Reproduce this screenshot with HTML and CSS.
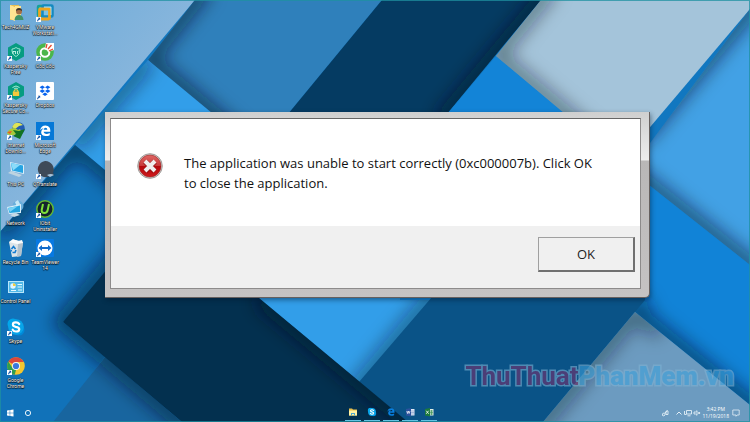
FILE: index.html
```html
<!DOCTYPE html>
<html lang="en">
<head>
<meta charset="utf-8">
<meta name="viewport" content="width=device-width, initial-scale=1">
<title>Desktop</title>
<link rel="stylesheet" href="styles.css">
</head>
<body>
<svg class="wallpaper" viewBox="0 0 750 422" preserveAspectRatio="none" aria-hidden="true">
  <defs>
    <filter id="soft" filterUnits="userSpaceOnUse" x="-60" y="-60" width="870" height="542"><feGaussianBlur stdDeviation="9"/></filter>
    <linearGradient id="sky" x1="0" y1="0" x2="1" y2="1"><stop offset="0" stop-color="#68a9d8"/><stop offset=".5" stop-color="#86b5dc"/><stop offset="1" stop-color="#86b5dc"/></linearGradient>
    <clipPath id="c1"><path d="M195 0H382L250 160 148 60Z"/></clipPath>
    <clipPath id="c2"><path d="M148 60 450 310 359 382 75 145Z"/></clipPath>
    <clipPath id="c3"><path d="M0 232 75 145 180 233 63 322 105 357 53 422H0Z"/></clipPath>
    <clipPath id="c4"><path d="M382 0H541L380 195 250 160Z"/></clipPath>
    <clipPath id="c5"><path d="M541 0H750V9L640 139 620 160 496 56Z"/></clipPath>
    <clipPath id="c6"><path d="M750 9V265L630 170Z"/></clipPath>
    <clipPath id="c7"><path d="M630 170 750 265V405L635 312 600 280Z"/></clipPath>
    <clipPath id="c8"><path d="M438 290H645V300L635 312 543 422H408L359 382Z"/></clipPath>
    <clipPath id="c9"><path d="M635 312 750 405V422H543Z"/></clipPath>
    <clipPath id="c10"><path d="M105 357 182 422H53Z"/></clipPath>
    <clipPath id="c11"><path d="M148 220 63 322 182 422H408L259 298 200 250Z"/></clipPath>
  </defs>
  <path fill="#1177c0" d="M0 0H750V422H0Z"/>
  <path fill="url(#sky)" d="M0 0H195L0 232Z"/>
  <g clip-path="url(#c1)"><path fill="#2f80bb" d="M0 0H750V422H0Z"/><path class="shade" d="M205-12 148 60 270 162"/></g>
  <g clip-path="url(#c2)"><path fill="#329ee9" d="M0 0H750V422H0Z"/><path class="shade light" d="M148 60 75 145M438 290 352 394"/></g>
  <g clip-path="url(#c3)"><path fill="#1172b9" d="M0 0H750V422H0Z"/><path class="shade" d="M0 232 75 145 180 233M150 215 63 322 115 366"/></g>
  <g clip-path="url(#c4)"><path fill="#053b62" d="M0 0H750V422H0Z"/><path class="shade" d="M551-12 440 122"/></g>
  <path fill="#1384d7" d="M496 56 620 160 600 300H400V170Z"/>
  <g clip-path="url(#c5)"><path fill="#a4c4da" d="M0 0H750V422H0Z"/><path class="shade light" d="M551-12 496 56 610 151"/></g>
  <g clip-path="url(#c6)"><path fill="#42a1e5" d="M0 0H750V422H0Z"/><path class="shade" d="M760-3 640 139M630 170 760 273"/></g>
  <g clip-path="url(#c7)"><path fill="#1183d7" d="M0 0H750V422H0Z"/><path class="shade" d="M645 300 635 312 770 421"/></g>
  <g clip-path="url(#c8)"><path fill="#0a5387" d="M0 0H750V422H0Z"/></g>
  <g clip-path="url(#c9)"><path fill="#6c9bc0" d="M0 0H750V422H0Z"/><path class="shade light" d="M635 312 535 432M635 312 660 332"/></g>
  <g clip-path="url(#c10)"><path fill="#18659f" d="M0 0H750V422H0Z"/><path class="shade" d="M95 349 190 429"/></g>
  <g clip-path="url(#c11)"><path fill="#03304f" d="M0 0H750V422H0Z"/><path class="shade" d="M259 298 420 432"/></g>
</svg>

<svg class="defs" aria-hidden="true">
  <symbol id="arrow" viewBox="0 0 6 6"><path fill="#fff" d="M0 0H6V6H0Z"/><path fill="#1553a5" d="M2.300 1H5V3.700L4.100 2.900Q2.600 3.600 2.500 5.200H1.300Q1.200 3 3.200 2Z"/></symbol>
  <symbol id="skype" viewBox="0 0 18 18"><circle cx="6" cy="6" r="5.500" fill="#00a9ed"/><circle cx="12" cy="12" r="5.500" fill="#0089d8"/><circle cx="9" cy="9" r="7.800" fill="#08a4e8"/><path fill="none" stroke="#fff" stroke-width="2.200" stroke-linecap="round" d="M12.200 6Q11 4.300 8.700 4.400 5.900 4.500 5.900 6.500 5.900 8.200 8.700 8.800 12.300 9.400 12.200 11.300 12 13.500 9 13.500 6.700 13.500 5.700 11.700"/></symbol>
  <symbol id="edge" viewBox="0 0 12 12"><path d="M.7 5.500Q1.500 .5 6.300 .5 11.300 .8 11.300 5.700V7H4.200Q4.500 9.200 7 9.300 9 9.300 10.700 8.300V10.700Q9 11.600 6.500 11.600 1.800 11.300 1.700 7.500 1.800 5 4.300 3.500 2.300 3.600 .7 5.500ZM4.300 5H8.200Q8.100 2.900 6.400 2.900 4.700 3.100 4.300 5Z"/></symbol>
</svg>

<div class="screen">
<main class="desktop">
  <ul class="icons">
    <li><a class="icon" href="#"><svg viewBox="0 0 18 18"><path fill="#e6bd50" d="M3 1H12V16H3Z"/><path fill="#ffe592" d="M3 1 8 3V17L3 15ZM8 2H14V14H8Z"/><circle cx="12" cy="7.500" r="3" fill="#a66f45"/><path fill="#3e3429" d="M9 7Q9 4 12 4 15 4 15 7Q12 5 9 7Z"/><path fill="#40936a" d="M7.500 16Q8 11 12 11 16 11 16.500 16Z"/></svg><span>Tech4GMUZ</span></a></li>
    <li><a class="icon" href="#"><svg viewBox="0 0 18 18"><rect x="2" y="2" width="10" height="10" rx="1" fill="none" stroke="#15a19a" stroke-width="2.500"/><rect x="6.500" y="1.500" width="10" height="11" rx="1" fill="#7cc3e4" stroke="#168abf" stroke-width="2.500"/><rect x="3.500" y="5" width="10" height="10" rx="1" fill="none" stroke="#eda51e" stroke-width="2.800"/><path fill="none" stroke="#c5e9f4" stroke-width=".7" d="M8 3H15V11"/><use href="#arrow" y="13" width="5" height="5"/></svg><span>VMware<br>Workstati...</span></a></li>
    <li><a class="icon" href="#"><svg viewBox="0 0 18 18"><path fill="#079c81" d="M9 0 17 4.500V13.500L9 18 1 13.500V4.500Z"/><path fill="none" stroke="#b6f5de" stroke-width=".8" d="M9 4.500Q7 6 5 6 4.500 11 9 13.500 13.500 11 13 6 11 6 9 4.500Z"/><path fill="none" stroke="#e1fff5" stroke-width=".8" d="M6 8V11M6 8.500H8M8.500 8V11M10.500 8V11M11.500 8H13"/><use href="#arrow" y="13" width="5" height="5"/></svg><span>Kaspersky<br>Free</span></a></li>
    <li><a class="icon" href="#"><svg viewBox="0 0 18 18"><circle cx="9" cy="9" r="8.800" fill="#4bb64b"/><path fill="#fff" d="M8.500 7 10 0H18V7L11 9Z"/><circle cx="9" cy="9.500" r="4.300" fill="none" stroke="#fff" stroke-width="2"/><circle cx="9" cy="9.500" r="2.700" fill="#4bb64b"/><path fill="none" stroke="#e6492f" stroke-width="1.300" d="M10 5 11 1M12 6 15.500 2M13 8 17 6"/><use href="#arrow" y="13" width="5" height="5"/></svg><span>Cốc Cốc</span></a></li>
    <li><a class="icon" href="#"><svg viewBox="0 0 18 18"><path fill="#079c81" d="M9 0 17 4.500V13.500L9 18 1 13.500V4.500Z"/><path fill="none" stroke="#b6f5de" stroke-width=".9" d="M5.500 5.500Q9 2.500 12.500 5.500M7 7Q9 5 11 7"/><path fill="none" stroke="#f4cf45" stroke-width="1.200" d="M7 11V9Q9 6.500 11 9V11"/><rect x="5.800" y="9.500" width="6.400" height="4.500" rx=".6" fill="#f5c93c"/><use href="#arrow" y="13" width="5" height="5"/></svg><span>Kaspersky<br>Secure Co...</span></a></li>
    <li><a class="icon" href="#"><svg viewBox="0 0 18 18"><rect width="18" height="18" rx="1" fill="#fff"/><path fill="#0864ee" d="M6.300 3.500 9 5.300 6.300 7.100 3.600 5.300ZM11.700 3.500 14.400 5.300 11.700 7.100 9 5.300ZM6.300 7.300 9 9.100 6.300 10.900 3.600 9.100ZM11.700 7.300 14.400 9.100 11.700 10.900 9 9.100ZM9 10.500 11.700 12.300 9 14.100 6.300 12.300Z"/><use href="#arrow" y="13" width="5" height="5"/></svg><span>Dropbox</span></a></li>
    <li><a class="icon" href="#"><svg viewBox="0 0 18 18"><circle cx="11.500" cy="6.500" r="6.300" fill="#235cb2"/><path fill="#dfe457" d="M7 2Q11-1 16 3L12 4 8 7 5 5Z"/><path fill="#a7ca38" d="M2 8Q7 4 11 8L13 7 14 9 7 13Q1 14 0 11Z"/><path fill="#127323" d="M6 8 12 9 18 7 13 17 6 14 9 12Z"/><path fill="#e95828" d="M0 10 5 9 3 12Z"/><use href="#arrow" y="13" width="5" height="5"/></svg><span>Internet<br>Downlo...</span></a></li>
    <li><a class="icon" href="#"><svg viewBox="0 0 18 18"><rect width="18" height="18" fill="#0678d7"/><use href="#edge" x="3.500" y="3" width="11.500" height="11.500" fill="#fff"/><use href="#arrow" y="13" width="5" height="5"/></svg><span>Microsoft<br>Edge</span></a></li>
    <li><a class="icon" href="#"><svg viewBox="0 0 18 18"><path fill="#d8effa" d="M3 1 17 4V13L4 10Z"/><path fill="#26a4e2" d="M4 2 16 4.500V12L5 9.500Z"/><path fill="#8adcfa" d="M4 2 13 4 6 9.500Z"/><path fill="#bed4e0" d="M1 12 4 10 15 14 12 16Z"/></svg><span>This PC</span></a></li>
    <li><a class="icon" href="#"><svg viewBox="0 0 18 18"><path fill="#3e4a58" d="M9 0A8.500 8.500 0 0 1 17 12L18 14 14 15Q9 18 4 14A8.500 8.500 0 0 1 9 0Z"/><path fill="#a7c3da" d="M11 14Q15 12 18 14L14 16Z"/><use href="#arrow" y="13" width="5" height="5"/></svg><span>QTranslate</span></a></li>
    <li><a class="icon" href="#"><svg viewBox="0 0 18 18"><circle cx="11" cy="6" r="5.500" fill="#69aeda"/><path fill="#c4e7f7" d="M8 2 11 0 13 4 10 7Z"/><path fill="#d8effa" d="M0 7 14 4V13L2 14Z"/><path fill="#24a5df" d="M1 8 13 5.500V12L2.500 13Z"/><path fill="#77d2f5" d="M1 8 11 6 3 12Z"/><path fill="#c8dce6" d="M3 15 9 13 13 15 7 17Z"/></svg><span>Network</span></a></li>
    <li><a class="icon" href="#"><svg viewBox="0 0 18 18"><circle cx="9" cy="9" r="8.200" fill="#14232d" stroke="#64b832" stroke-width="1.500"/><path fill="none" stroke="#7de139" stroke-width="2" d="M7 4 5.700 10Q5.500 13 8.500 13 11 13 11.700 10L13 4"/><use href="#arrow" y="13" width="5" height="5"/></svg><span>IObit<br>Uninstaller</span></a></li>
    <li><a class="icon" href="#"><svg viewBox="0 0 18 18"><path fill="#dce4e8" d="M2 3 9 1 16 3 14 17 5 18Z"/><path fill="#b4c2cc" d="M11 5 16 3 14 17 10 18Z"/><path fill="#f9fbfc" d="M2 3 6 0 11 2 15 1 16 4 10 5Z"/><path fill="none" stroke="#147bd0" stroke-width="1.600" d="M4.500 10 6.500 7.500 8.500 10M9 11 8 13.500H5.500M4.500 12.500 4 11"/></svg><span>Recycle Bin</span></a></li>
    <li><a class="icon" href="#"><svg viewBox="0 0 18 18"><rect width="18" height="18" rx="1" fill="#0879e2"/><circle cx="9" cy="9" r="7.500" fill="#fff"/><path fill="#116bca" d="M2.500 9 6 6V8H12V6L15.500 9 12 12V10H6V12Z"/><use href="#arrow" y="13" width="5" height="5"/></svg><span>TeamViewer<br>14</span></a></li>
    <li><a class="icon" href="#"><svg viewBox="0 0 18 18"><rect x="1" y="3" width="16" height="12" fill="#b8e6fa"/><rect x="2" y="4" width="14" height="10" fill="#51b9e8"/><circle cx="6" cy="8" r="2.700" fill="#e1f6ff"/><path fill="#f4cd3d" d="M6 8V5.300A2.700 2.700 0 0 1 8.700 8Z"/><path stroke="#e2f8ff" d="M10.500 6.500H15M10.500 9H15M4 12.500H9M11 12H15"/></svg><span>Control Panel</span></a></li>
    <li></li>
    <li><a class="icon" href="#"><svg viewBox="0 0 18 18"><use href="#skype" width="18" height="18"/><use href="#arrow" y="13" width="5" height="5"/></svg><span>Skype</span></a></li>
    <li></li>
    <li><a class="icon" href="#"><svg viewBox="0 0 18 18"><circle cx="9" cy="9" r="8.800" fill="#f3c62e"/><path fill="#dc473b" d="M9 9 1.300 4.600A8.800 8.800 0 0 1 16.700 5H9Z"/><path fill="#309e50" d="M1.300 4.600 5.500 11 9 13 7.700 17.700A8.800 8.800 0 0 1 1.300 4.600Z"/><circle cx="9" cy="9" r="4" fill="#f2f5f7"/><circle cx="9" cy="9" r="3.100" fill="#3a78dd"/><use href="#arrow" y="13" width="5" height="5"/></svg><span>Google<br>Chrome</span></a></li>
  </ul>

  <section class="dialog" role="alertdialog" aria-describedby="message">
    <div class="pane">
      <div class="content">
        <svg class="error" viewBox="0 0 26 26" aria-hidden="true"><defs><linearGradient id="red" x1="0" y1="0" x2="0" y2="1"><stop offset="0" stop-color="#df6764"/><stop offset=".48" stop-color="#c93a3b"/><stop offset=".52" stop-color="#b4080d"/><stop offset="1" stop-color="#cf1a1d"/></linearGradient></defs><circle cx="13" cy="13" r="12.300" fill="#d9d5d3" stroke="#8b8583" stroke-width=".8"/><circle cx="13" cy="13" r="11" fill="url(#red)" stroke="#9b2424" stroke-width=".6"/><path stroke="#781012" stroke-opacity=".5" stroke-width="5.500" d="M8 8.500 18 18.500M18 8.500 8 18.500"/><path stroke="#f0eeee" stroke-width="4" d="M8 8 18 18M18 8 8 18"/></svg>
        <p id="message">The application was unable to start correctly (0xc000007b). Click OK to close the application.</p>
      </div>
      <div class="actions"><button type="button">OK</button></div>
    </div>
  </section>
  <p class="watermark"><span>ThuThuat</span><b>PhanMem.vn</b></p>
</main>

<footer class="taskbar">
  <div class="start">
    <button type="button" aria-label="Start"><svg viewBox="0 0 8 8"><path fill="#fff" d="M1 1.500 3.700 1V3.700H1ZM4.200 1 7.500.5V3.700H4.200ZM1 4.200H3.700V7L1 6.500ZM4.200 4.200H7.500V7.500L4.200 7Z"/></svg></button>
    <button type="button" aria-label="Search"><svg viewBox="0 0 8 8"><circle cx="4" cy="4" r="2.600" fill="none" stroke="#e9f4fb"/></svg></button>
  </div>
  <div class="apps">
    <button type="button" aria-label="File Explorer"><svg viewBox="0 0 10 10"><path fill="#eabf4d" d="M1 1.500H4L5 2.500H9V8.500H1Z"/><path fill="#fff2a4" d="M1 3.500H9V8.500H1Z"/><path fill="#4ba7cf" d="M3 6H7V8.500H6V7H4V8.500H3Z"/></svg></button>
    <button type="button" aria-label="Skype"><svg viewBox="0 0 10 10"><use href="#skype" x=".5" y=".5" width="9" height="9"/></svg></button>
    <button type="button" aria-label="Microsoft Edge"><svg viewBox="0 0 10 10"><use href="#edge" x="1" y="1" width="8" height="8" fill="#087fdf"/></svg></button>
    <button type="button" aria-label="Word"><svg viewBox="0 0 10 10"><path fill="#dfe7f5" d="M5 2H9.500V8.500H5Z"/><path fill="#2b529d" d="M1 2 6 1V9.500L1 8.500Z"/><path fill="none" stroke="#fff" stroke-width=".7" d="M1.800 4 2.500 6.500 3.300 4 4.100 6.500 5 4"/><path stroke="#6786bd" stroke-width=".5" d="M6 4H9M6 5.500H9M6 7H9"/></svg></button>
    <button type="button" aria-label="Excel"><svg viewBox="0 0 10 10"><path fill="#e0efe3" d="M5 2H9.500V8.500H5Z"/><path fill="#1c7a3e" d="M1 2 6 1V9.500L1 8.500Z"/><path stroke="#fff" stroke-width=".8" d="M2.200 3.700 4.700 6.800M4.700 3.700 2.200 6.800"/><path stroke="#3c9256" stroke-width=".7" d="M6 4H9M6 5.500H9M6 7H9M7.500 3V8"/></svg></button>
  </div>
  <div class="tray">
    <svg class="pen" viewBox="0 0 8 8"><path fill="none" stroke="#e2eef6" stroke-width=".9" d="M1.500 6.500Q1 4 3 4 5 4 4 6 3 7.500 1.500 6.500ZM4 4 6.500 1.500M5 2V5.500H7V2Z"/></svg>
    <svg viewBox="0 0 8 8"><path fill="none" stroke="#e2eef6" d="M1.500 5.500 4 3 6.500 5.500"/></svg>
    <svg viewBox="0 0 8 8"><path fill="none" stroke="#e2eef6" stroke-width=".9" d="M2.500 1.500H7.500V5H2.500ZM3.500 6.800H6.500M.5 2V5.500H2.500"/></svg>
    <svg viewBox="0 0 8 8"><path fill="none" stroke="#e2eef6" stroke-width=".9" d="M1 3H2.500L4 1.700V6.300L2.500 5H1ZM5.300 3 7 5M7 3 5.300 5"/></svg>
    <time>3:42 PM<br>11/19/2018</time>
    <svg viewBox="0 0 8 8"><path fill="none" stroke="#e2eef6" stroke-width=".8" d="M.8 1H7.200V6H5L4 7.300V6H.8Z"/></svg>
  </div>
</footer>
</div>
</body>
</html>
```

FILE: styles.css
```css
* { box-sizing: border-box; }
body { margin: 0; background: #1177c0; font-family: "Open Sans", "Noto Sans", sans-serif; overflow: hidden; }
button { padding: 0; border: 0; background: none; font: inherit; }
svg { display: block; }
.defs { position: absolute; width: 0; height: 0; }
.wallpaper { position: absolute; inset: 0; width: 100%; height: 100%; }
.shade { fill: none; stroke: #001524; stroke-opacity: .6; stroke-width: 16; filter: url(#soft); }
.shade.light { stroke-opacity: .45; }

.screen { position: relative; min-height: 100vh; display: flex; flex-direction: column; border: 1px solid rgb(31 145 160 / .75); }
.desktop { flex: 1; display: flex; }

.icons { margin: 0; padding: 3px 0 9px; list-style: none; display: grid; grid-template-columns: 29px 30px; grid-template-rows: repeat(10, 1fr); }
.icons li { min-height: 0; height: 0; }
.icon { display: flex; flex-direction: column; align-items: center; gap: 2px; color: #fff; text-decoration: none; }
.icon svg { width: 18px; height: 18px; }
.icon span { font-family: Roboto, sans-serif; font-size: 5px; line-height: 6px; text-align: center; white-space: nowrap; text-shadow: 0 0 1px #000, 0 0 1px #000, 0 1px 1px #000; }

.dialog { position: absolute; top: 111px; left: 104px; right: 99px; padding: 6px 8px 8px 5px; border: solid #66605f; border-width: 0 1px 1px 0; border-radius: 0 0 5px 0; background: linear-gradient(#cfcfcf, #ededed 48px, #b9b7b7 49px, #c5c3c3); box-shadow: 1px 2px 5px rgb(0 20 40 / .45); }
.pane { border: 1px solid #8d8b8b; border-top-color: #666; background: #f0f0f0; }
.content { display: flex; align-items: flex-start; gap: 21px; min-height: 107px; padding: 34px 40px 30px 26px; background: #fff; }
.error { width: 26px; height: 26px; flex: none; }
.content p { margin: 0; font-size: 13px; line-height: 20px; color: #111; }
.actions { display: flex; justify-content: flex-end; padding: 11px 5px 16px; }
.actions button { width: 97px; height: 35px; border: 1px solid #a0a0a0; border-right: 2px solid #707070; border-bottom: 2px solid #707070; background: #f0f0f0; font-size: 13px; color: #222; }

.watermark { position: absolute; right: 15px; bottom: 28px; margin: 0; font: bold 26px/34px Roboto, "Liberation Sans", sans-serif; white-space: nowrap; opacity: .58; -webkit-text-stroke: 3px #7fb2d3; paint-order: stroke fill; }
.watermark span { color: #7a2f6c; }
.watermark b { color: #3fa2dc; }

.taskbar { position: relative; display: grid; grid-template-columns: 46% auto 1fr; height: 16px; }
.start, .apps, .tray { display: flex; align-items: center; }
.start { gap: 10px; padding-left: 5px; }
.start svg { width: 8px; height: 8px; }
.apps { gap: 3px; }
.apps button { width: 16px; height: 16px; display: flex; justify-content: center; padding-top: 2px; border-bottom: 1px solid #61c3e3; }
.apps svg { width: 10px; height: 10px; }
.tray { justify-content: flex-end; gap: 1px; padding-right: 9px; }
.tray svg { width: 8px; height: 8px; }
.tray .pen { margin-right: 5px; }
.tray time { padding-right: 2px; font-size: 5px; line-height: 7px; text-align: center; color: #fff; }
```
